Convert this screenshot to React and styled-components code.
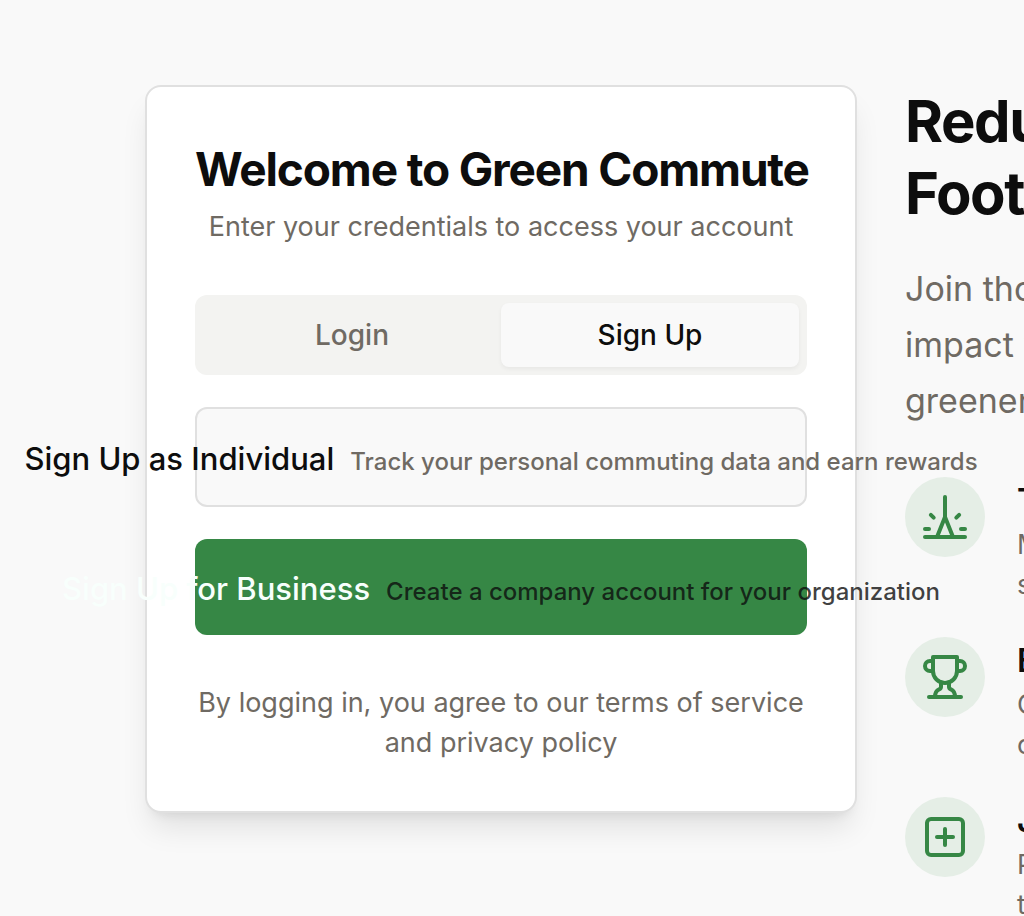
import React from "react";
import styled, { createGlobalStyle } from "styled-components";

const GlobalStyle = createGlobalStyle`
  *, *::before, *::after { box-sizing: border-box; }
  body {
    margin: 0;
    background: #f9f9f9;
    color: #0d0d0d;
    font-family: Inter, "Liberation Sans", sans-serif;
    -webkit-font-smoothing: antialiased;
  }
  h1, h2, h3, p, ul { margin: 0; padding: 0; }
  button { font: inherit; cursor: pointer; }
`;

const Page = styled.main`
  overflow: hidden;
  padding: 85px 0 32px 145px;
`;

const Layout = styled.div`
  display: grid;
  grid-template-columns: repeat(2, minmax(0, 1fr));
  align-items: start;
  gap: 48px;
  width: calc(100% + 593px);
`;

const Card = styled.section`
  display: flex;
  flex-direction: column;
  padding: 48px;
  border: 2px solid #e0e0e0;
  border-radius: 16px;
  background: #fff;
  box-shadow: 0 20px 30px -6px rgba(0, 0, 0, 0.1), 0 8px 12px -8px rgba(0, 0, 0, 0.1);
`;

const CardHeader = styled.header`
  display: flex;
  flex-direction: column;
  gap: 4px;
  margin-bottom: 48px;
  text-align: center;
`;

const CardTitle = styled.h1`
  font-size: 46px;
  line-height: 68px;
  font-weight: 700;
  letter-spacing: -0.025em;
  white-space: nowrap;
`;

const Muted = styled.p`
  color: #6f6a63;
  font-size: 27px;
  line-height: 40px;
  text-align: center;
`;

const TabList = styled.div`
  display: grid;
  grid-template-columns: 1fr 1fr;
  padding: 8px;
  border-radius: 12px;
  background: #f3f3f1;
`;

const Tab = styled.button`
  height: 64px;
  border: 0;
  border-radius: 8px;
  background: ${(p) => (p.$active ? "#f9f9f9" : "transparent")};
  color: ${(p) => (p.$active ? "#0d0d0d" : "#6f6a63")};
  box-shadow: ${(p) => (p.$active ? "0 2px 4px rgba(0, 0, 0, 0.05)" : "none")};
  font-size: 28px;
  line-height: 40px;
  font-weight: 500;
`;

const Actions = styled.div`
  display: flex;
  flex-direction: column;
  gap: 32px;
  margin: 32px 0 48px;
`;

const ActionButton = styled.button`
  display: flex;
  align-items: center;
  justify-content: center;
  height: ${(p) => (p.$primary ? "96px" : "100px")};
  padding: 4px 0 0;
  border: ${(p) => (p.$primary ? "0" : "2px solid #e0e0e0")};
  border-radius: 12px;
  background: ${(p) => (p.$primary ? "#368745" : "#f9f9f9")};
  color: ${(p) => (p.$primary ? "#f8fffc" : "#0d0d0d")};
  font-weight: 500;
  white-space: nowrap;
`;

const ActionText = styled.span`
  display: flex;
  flex: none;
  align-items: baseline;
  gap: 16px;
`;

const ActionName = styled.span`
  font-size: 31px;
  line-height: 48px;
`;

const ActionHint = styled.span`
  color: ${(p) => (p.$primary ? "rgba(13, 13, 13, 0.8)" : "#6f6a63")};
  font-size: 24px;
  line-height: 32px;
`;

const Headline = styled.h2`
  margin-bottom: 32px;
  font-size: 58px;
  line-height: 72px;
  font-weight: 700;
  letter-spacing: -0.025em;
`;

const Lead = styled.p`
  margin-bottom: 48px;
  color: #6f6a63;
  font-size: 34px;
  line-height: 56px;
`;

const Line = styled.span`
  display: block;
  white-space: nowrap;
`;

const FeatureList = styled.ul`
  display: flex;
  flex-direction: column;
  gap: 32px;
  list-style: none;
`;

const Feature = styled.li`
  display: flex;
  align-items: flex-start;
  gap: 32px;
`;

const IconDisc = styled.span`
  display: grid;
  flex: none;
  place-items: center;
  width: 80px;
  height: 80px;
  border-radius: 50%;
  background: #e5eee6;
  color: #368745;
`;

const FeatureTitle = styled.h3`
  font-size: 32px;
  line-height: 48px;
  font-weight: 600;
`;

const FeatureText = styled.p`
  color: #6f6a63;
  font-size: 27px;
  line-height: 40px;
`;

const Icon = ({ children }) => (
  <svg width="48" height="48" viewBox="0 0 24 24" fill="none" stroke="currentColor" strokeWidth="2" strokeLinecap="round" strokeLinejoin="round" aria-hidden="true">
    {children}
  </svg>
);

const features = [
  {
    title: "Track Your Impact",
    lines: ["Monitor your carbon", "savings over time"],
    icon: (
      <>
        <path d="M12 2v10" />
        <path d="m4.93 10.93 1.41 1.41" />
        <path d="M2 18h2" />
        <path d="M20 18h2" />
        <path d="m19.07 10.93-1.41 1.41" />
        <path d="M22 22H2" />
        <path d="m8 22 4-10 4 10" />
      </>
    ),
  },
  {
    title: "Earn Rewards",
    lines: ["Get points for every", "commute you make"],
    icon: (
      <>
        <path d="M6 9H4.5a2.5 2.5 0 0 1 0-5H6" />
        <path d="M18 9h1.5a2.5 2.5 0 0 0 0-5H18" />
        <path d="M4 22h16" />
        <path d="M10 14.66V17c0 .55-.47.98-.97 1.21C7.85 18.75 7 20.24 7 22" />
        <path d="M14 14.66V17c0 .55.47.98.97 1.21C16.15 18.75 17 20.24 17 22" />
        <path d="M18 2H6v7a6 6 0 0 0 12 0V2Z" />
      </>
    ),
  },
  {
    title: "Join Challenges",
    lines: ["Participate with your", "team and friends"],
    icon: (
      <>
        <rect width="18" height="18" x="3" y="3" rx="2" />
        <path d="M8 12h8" />
        <path d="M12 8v8" />
      </>
    ),
  },
];

export default function App() {
  return (
    <>
      <GlobalStyle />
      <Page>
        <Layout>
          <Card>
            <CardHeader>
              <CardTitle>Welcome to Green Commute</CardTitle>
              <Muted>Enter your credentials to access your account</Muted>
            </CardHeader>
            <TabList role="tablist">
              <Tab type="button" role="tab" aria-selected="false">Login</Tab>
              <Tab type="button" role="tab" aria-selected="true" $active>Sign Up</Tab>
            </TabList>
            <Actions>
              <ActionButton type="button">
                <ActionText>
                  <ActionName>Sign Up as Individual</ActionName>
                  <ActionHint>Track your personal commuting data and earn rewards</ActionHint>
                </ActionText>
              </ActionButton>
              <ActionButton type="button" $primary>
                <ActionText>
                  <ActionName>Sign Up for Business</ActionName>
                  <ActionHint $primary>Create a company account for your organization</ActionHint>
                </ActionText>
              </ActionButton>
            </Actions>
            <Muted>By logging in, you agree to our terms of service and privacy policy</Muted>
          </Card>
          <section>
            <Headline>
              <Line>Reduce Your Carbon</Line>
              <Line>Footprint</Line>
            </Headline>
            <Lead>
              <Line>Join thousands making an</Line>
              <Line>impact with a cleaner and</Line>
              <Line>greener commute</Line>
            </Lead>
            <FeatureList>
              {features.map((f) => (
                <Feature key={f.title}>
                  <IconDisc><Icon>{f.icon}</Icon></IconDisc>
                  <div>
                    <FeatureTitle>{f.title}</FeatureTitle>
                    <FeatureText>
                      {f.lines.map((l) => <Line key={l}>{l}</Line>)}
                    </FeatureText>
                  </div>
                </Feature>
              ))}
            </FeatureList>
          </section>
        </Layout>
      </Page>
    </>
  );
}
